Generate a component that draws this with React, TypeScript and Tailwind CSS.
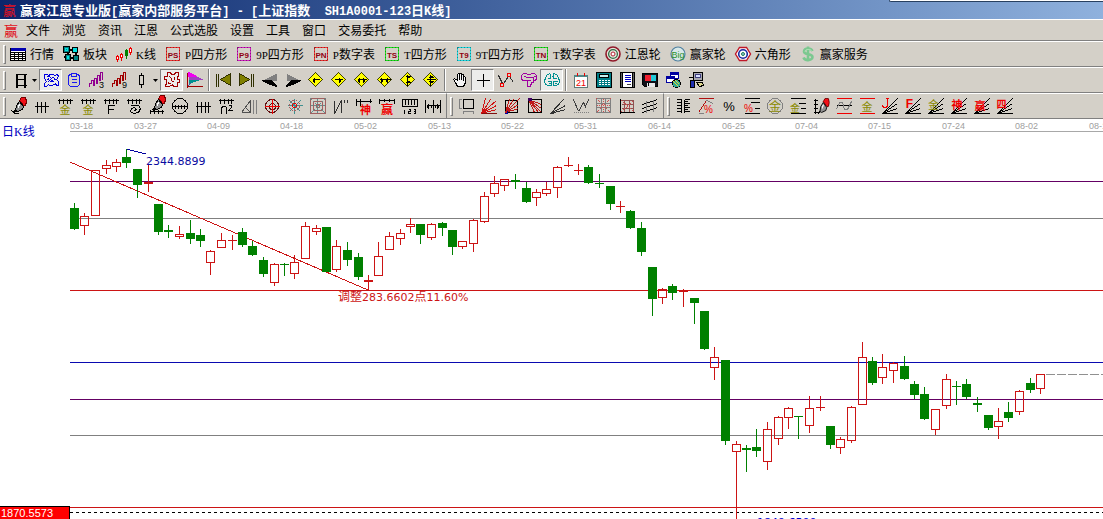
import React from "react";

const INK = "#000";
const RED = "#f00000";
const OLIVE = "#8a8a00";
const GRAY = "#808080";

/* ---------- text ---------- */

interface MixedTextProps {
  text: string;
  latin: string;
}

// Latin runs use their own face and size next to the CJK glyphs.
const MixedText: React.FC<MixedTextProps> = ({ text, latin }) => (
  <>
    {text.split(/([\x20-\x7e]+)/).map((part, index) =>
      index % 2 === 1 ? (
        <span key={index} className={latin}>
          {part}
        </span>
      ) : (
        part
      )
    )}
  </>
);

/* ---------- icon parts ---------- */

interface GlyphProps {
  children: React.ReactNode;
  smooth?: boolean;
}

const Glyph: React.FC<GlyphProps> = ({ children, smooth = false }) => (
  <svg
    className="block h-4 w-4 shrink-0 overflow-visible"
    viewBox="-0.5 -0.5 16 16"
    fill="none"
    stroke={INK}
    shapeRendering={smooth ? "auto" : "crispEdges"}
    aria-hidden="true"
  >
    {children}
  </svg>
);

interface CharProps {
  x: number;
  y: number;
  size?: number;
  color?: string;
  bold?: boolean;
  children: string;
}

const Char: React.FC<CharProps> = ({
  x,
  y,
  size = 10,
  color = RED,
  bold = false,
  children,
}) => (
  <text
    x={x}
    y={y}
    fontSize={size}
    fill={color}
    stroke="none"
    textAnchor="middle"
    fontWeight={bold ? 700 : 400}
    fontFamily='"Liberation Sans", "Noto Sans CJK SC", sans-serif'
  >
    {children}
  </text>
);

const Comb = () => <path d="M0 2h15M2 0v5M6 0v5M10 0v5M13 0v5" />;

const Brush = () => (
  <g>
    <path d="M8 2l2-3 4 0 1 4-1 4-2 0z" fill="#f01018" stroke="#700" />
    <path d="M8 3l4 5-1 3-5 2-2-1 1-5z" fill="#909090" stroke={INK} />
    <path d="M7 6v3M8 5v2" stroke="#fff" />
    <path d="M4 12l-2 2" stroke={INK} strokeWidth="2" />
  </g>
);

const Fan = () => <path d="M0 15L15 0M0 15L15 5M0 15L15 10M0 15h15" />;

interface SquareProps {
  label: string;
  color: string;
}

const SquareIcon: React.FC<SquareProps> = ({ label, color }) => (
  <Glyph>
    <rect x="1" y="1" width="13" height="13" stroke={color} strokeWidth="1" />
    <rect
      x="1"
      y="1"
      width="13"
      height="13"
      stroke={INK}
      strokeOpacity="0.35"
      strokeDasharray="1 2"
    />
    <Char x={7.5} y={11} size={8} color="#900010" bold>
      {label}
    </Char>
  </Glyph>
);

interface DiamondProps {
  d: string;
}

const DiamondIcon: React.FC<DiamondProps> = ({ d }) => (
  <Glyph>
    <path d="M7 0l7 7-7 7-7-7z" fill="#ffff00" stroke="#404000" />
    <path d={d} stroke={INK} />
  </Glyph>
);

/* ---------- first toolbar ---------- */

interface Tool {
  label: string;
  icon: React.ReactNode;
  pressed?: boolean;
  menu?: boolean;
}

const pageTools: Tool[] = [
  {
    label: "行情",
    icon: (
      <Glyph>
        <path d="M0 2h15v12H0z" fill="#fff" />
        <path d="M0 2h15M0 3h15" stroke="#0000b0" strokeWidth="2" />
        <path d="M0 6h15M0 8h15M0 10h15M0 12h15M0 14h15M4 5v9M8 5v9M12 5v9" />
      </Glyph>
    ),
  },
  {
    label: "板块",
    icon: (
      <Glyph>
        <path d="M0 0h6v6H0zM2 8h5v6H2zM10 9h5v5h-5z" fill="#008080" />
        <path d="M9 1h5v5H9z" fill="#00e0e0" />
        <path d="M6 3h3M12 6v3M7 11h3M4 6v2M0 10h2" strokeWidth="2" />
        <path d="M2 2h2v2H2zM4 10h1v2H4z" stroke="#00e0e0" />
      </Glyph>
    ),
  },
  {
    label: "K线",
    icon: (
      <Glyph>
        <path d="M1 8v7M5 6v8M14 0v8" stroke={RED} />
        <path d="M0 10h2v3H0zM4 8h2v3H4zM13 2h2v4h-2z" fill="#fff" stroke={RED} />
        <path d="M10 2v10" stroke="#008000" />
        <path d="M9 4h2v5H9z" fill="#008000" stroke="#008000" />
      </Glyph>
    ),
  },
  { label: "P四方形", icon: <SquareIcon label="PS" color="#f03030" /> },
  { label: "9P四方形", icon: <SquareIcon label="P9" color="#d020c0" /> },
  { label: "P数字表", icon: <SquareIcon label="PN" color="#f03030" /> },
  { label: "T四方形", icon: <SquareIcon label="TS" color="#20e020" /> },
  { label: "9T四方形", icon: <SquareIcon label="T9" color="#20d8e0" /> },
  { label: "T数字表", icon: <SquareIcon label="TN" color="#20e020" /> },
  {
    label: "江恩轮",
    icon: (
      <Glyph smooth>
        <circle cx="7.5" cy="7.5" r="7" fill="#e8e4dc" stroke="#901828" strokeWidth="1.6" />
        <circle cx="7.5" cy="7.5" r="4.4" stroke="#307048" strokeWidth="1.3" />
        <circle cx="7.5" cy="7.5" r="2" fill="#fff" stroke="#b02030" />
      </Glyph>
    ),
  },
  {
    label: "赢家轮",
    icon: (
      <Glyph smooth>
        <circle cx="7.5" cy="7.5" r="7" fill="#d8e8e8" stroke="#5080a0" strokeWidth="1.2" />
        <Char x={7.5} y={11} size={9} color="#289028">
          Big
        </Char>
      </Glyph>
    ),
  },
  {
    label: "六角形",
    icon: (
      <Glyph smooth>
        <path d="M4 1h7l4 6.5-4 6.5H4L0 7.5z" fill="#fff" stroke="#c01828" strokeWidth="1.4" />
        <circle cx="7.5" cy="7.5" r="4.3" stroke="#1828a0" strokeWidth="1.6" />
        <circle cx="7.5" cy="7.5" r="1.5" fill="#90c0e0" stroke="#208050" />
      </Glyph>
    ),
  },
  {
    label: "赢家服务",
    icon: (
      <Glyph smooth>
        <path
          d="M12 4.5C11 2.500 9 2 7.500 2 5 2 3.500 3.300 3.500 5c0 4 8.500 1.500 8.500 5.500C12 12.500 10 13.500 7.500 13.500 5 13.500 3.500 12.500 3 11M7.500 0v15"
          stroke="#7cc890"
          strokeWidth="2.600"
        />
        <path d="M11 4C9 2.500 5 2.500 4.500 5" stroke="#b4e8bc" />
      </Glyph>
    ),
  },
];

/* ---------- second toolbar ---------- */

const viewTools: Tool[][] = [
  [
    {
      label: "日线周期",
      menu: true,
      icon: (
        <Glyph>
          <path d="M3 2h11M4 7h9M3 13h11M4 2v13M5 2v13M12 2v13M13 2v13" />
        </Glyph>
      ),
    },
    {
      label: "叠加",
      pressed: true,
      icon: (
        <Glyph>
          <path
            d="M1 2h3l1 1 2-1h3l1 1 3-1 1 2-2 3 2 2v4h-2l-1-2-3 2H6l-1-1-2 2H1v-3l2-2-2-3zM3 4h3l2 2 3-2M4 10l3-3 4 3M6 9h3M5 6l-1 2M11 6l1 2"
            stroke="#0000e0"
          />
        </Glyph>
      ),
    },
    {
      label: "信息",
      icon: (
        <Glyph>
          <path d="M3 2h2V1h5v1h2l1 2v8l-2 2H4l-2-2V4zM5 2v2h5V2M5 7h5M5 10h5" stroke="#1818f0" />
        </Glyph>
      ),
    },
    {
      label: "三段线",
      icon: (
        <Glyph>
          <path d="M0 14v-3h2V8h2v5h1V6h2v5h1V3h2v5h1V0h2v7" stroke="#900090" />
          <Char x={12} y={15} size={9} color={INK}>
            3
          </Char>
        </Glyph>
      ),
    },
    {
      label: "九段线",
      icon: (
        <Glyph>
          <path d="M0 14v-3h2V8h2v5h1V6h2v5h1V3h2v5h1V0h2v7" stroke="#a00000" />
          <Char x={12} y={15} size={9} color={INK}>
            9
          </Char>
        </Glyph>
      ),
    },
    {
      label: "K线样式",
      menu: true,
      icon: (
        <Glyph>
          <path d="M6 3h4v9H6zM8 0v3M8 12v3" />
        </Glyph>
      ),
    },
    {
      label: "缺口",
      pressed: true,
      icon: (
        <Glyph>
          <path
            d="M3 0h3l1 2h3l1-2h3v4h-1v3h2v3h-2v4h-4l-1-2-3 2H1l1-4V7H0V4h3zM5 4l2 2v2l3 2M10 4v3M4 9v2h2M9 5h1"
            stroke="#a00000"
          />
        </Glyph>
      ),
    },
    {
      label: "筹码分布",
      icon: (
        <Glyph>
          <path d="M1 0l8 4H1z" fill="#f000f0" stroke="#f000f0" />
          <path d="M1 4h8l6 3H1z" fill="#a040c0" stroke="none" />
          <path d="M1 7h13l-9 3H1z" fill="#009090" stroke="none" />
          <path d="M1 10h4l-4 3z" fill="#4060a0" stroke="none" />
          <path d="M0 0v15M0 14h15" stroke="#a00000" />
        </Glyph>
      ),
    },
  ],
  [
    {
      label: "最前",
      icon: (
        <Glyph>
          <path d="M0 1v13M2 1v13" stroke="#303000" />
          <path d="M14 1v12L4 7z" fill="#808000" stroke="#303000" />
        </Glyph>
      ),
    },
    {
      label: "最后",
      icon: (
        <Glyph>
          <path d="M14 1v13M12 1v13" stroke="#303000" />
          <path d="M0 1v12l10-6z" fill="#808000" stroke="#303000" />
        </Glyph>
      ),
    },
    {
      label: "向前",
      icon: (
        <Glyph>
          <path d="M14 1v7H1z" fill="#808080" stroke="none" />
          <path d="M0 8h9l5 5v1l-6-2z" fill={INK} stroke={INK} />
        </Glyph>
      ),
    },
    {
      label: "向后",
      icon: (
        <Glyph>
          <path d="M1 1v7h13z" fill="#808080" stroke="none" />
          <path d="M15 8H6l-5 5v1l6-2z" fill={INK} stroke={INK} />
        </Glyph>
      ),
    },
    { label: "左移", icon: <DiamondIcon d="M4 7h7M5 6v3M6 5v5" /> },
    { label: "右移", icon: <DiamondIcon d="M3 7h8M9 6v3M8 5v5" /> },
    { label: "横向放大", icon: <DiamondIcon d="M3 7h9M4 6v3M5 5v5M10 6v3M9 5v5" /> },
    { label: "横向缩小", icon: <DiamondIcon d="M2 7h11M5 6v3M4 5v5M9 6v3M10 5v5" /> },
    { label: "纵向缩小", icon: <DiamondIcon d="M7 2v11M6 5h3M5 4h5M6 9h3M5 10h5" /> },
    { label: "纵向放大", icon: <DiamondIcon d="M7 2v11M6 4h3M5 5h5M6 10h3M5 9h5M3 7h9" /> },
  ],
  [
    {
      label: "拖动",
      icon: (
        <Glyph>
          <path d="M5 14l-2-4-2-3 1-1 3 2V2l1-1 1 1v5V1h2v6V2h2v6V4h1l1 1v5l-2 4z" fill="#f4f4f4" />
        </Glyph>
      ),
    },
    {
      label: "十字光标",
      pressed: true,
      icon: (
        <Glyph>
          <path d="M1 8h13M8 1v13" />
        </Glyph>
      ),
    },
    {
      label: "转折点",
      icon: (
        <Glyph>
          <path d="M0 3l4 8M5 11l5-7M11 4l4 6" stroke="#303030" />
          <path d="M2 11h3v3H2zM9 1h3v3H9z" stroke={RED} />
        </Glyph>
      ),
    },
    {
      label: "头肩",
      icon: (
        <Glyph>
          <path
            d="M2 1h3l1 1h3l1-1h3l2 2v4l-2 1h-2M2 1L0 3v4l2 1h3M4 5h8v5h-2v2H9v2H6V8h3M2 4h2M12 4h2"
            stroke="#a000a0"
          />
        </Glyph>
      ),
    },
    {
      label: "脑图",
      pressed: true,
      icon: (
        <Glyph>
          <path
            d="M6 1L3 2 1 5l-1 4 1 3 3 1h3V9H3M9 1l3 1 2 3 1 4-1 3-3 1H9V9h4M6 1v5H3M9 1v5h3M4 11h2M10 11h2M7 4h2"
            stroke="#009090"
          />
        </Glyph>
      ),
    },
  ],
  [
    {
      label: "日历",
      icon: (
        <Glyph>
          <path d="M1 3h13v12H1z" fill="#fff" stroke="#607878" />
          <path d="M1 3h13v1H1z" fill="#00b0b0" stroke="#508888" />
          <path d="M4 0v3M11 0v3" stroke={RED} />
          <Char x={7.5} y={13} size={9}>
            21
          </Char>
        </Glyph>
      ),
    },
    {
      label: "计算器",
      icon: (
        <Glyph>
          <path d="M0 0h15v15H0z" fill="#007c84" />
          <path d="M3 2h9v3H3z" fill="#c8f0f0" />
          <path d="M2 8h12M2 10h12M2 12h12" stroke="#fff" strokeDasharray="2 1" />
        </Glyph>
      ),
    },
    {
      label: "笔记",
      icon: (
        <Glyph>
          <path d="M1 0h13v15H1z" fill="#fff" />
          <path d="M1 0h2v15H1zM13 0h2v15h-2z" fill="#606060" />
          <path d="M5 3h6M5 5h6M5 7h6M5 9h6" stroke="#0000c0" />
          <path d="M7 12h4" stroke="#404040" />
        </Glyph>
      ),
    },
    {
      label: "保存",
      icon: (
        <Glyph>
          <path d="M0 1h15v13H2l-2-2z" fill="#101018" />
          <path d="M2 2h6v6H2z" fill="#f02030" stroke="none" />
          <path d="M8 2h5v6H8z" fill="#20c8d8" stroke="none" />
          <path d="M4 10h8v4H4z" fill="#e8e8e8" stroke="none" />
          <path d="M6 10v3" />
        </Glyph>
      ),
    },
    {
      label: "窗口布局",
      icon: (
        <Glyph>
          <path d="M5 0h8v6H5zM1 4h8v6H1z" fill="#fff" stroke="#0000a0" />
          <path d="M5 1h8M1 5h8" stroke="#0000a0" strokeWidth="2" />
          <circle cx="11" cy="11" r="4" fill="#30a890" />
          <path d="M8 9l5 5M10 8l4 4" stroke="#e8d830" />
        </Glyph>
      ),
    },
    {
      label: "联网",
      icon: (
        <Glyph>
          <path d="M5 0h9v8H5z" fill="#a8a8b0" />
          <path d="M7 2h5v3H7z" fill="#d8e0ff" stroke="#404080" />
          <path d="M2 8h4v7H2z" fill="#2030b0" />
          <path d="M8 10h6l1 3-4 1z" fill="#e0d890" />
          <path d="M0 5h4M9 8h5" />
        </Glyph>
      ),
    },
  ],
];

/* ---------- drawing toolbar ---------- */

const drawTools: Tool[][] = [
  [
    {
      label: "画笔",
      icon: (
        <Glyph>
          <Brush />
          <path d="M0 12l3 3h4" stroke={INK} />
        </Glyph>
      ),
    },
    {
      label: "等分线",
      icon: (
        <Glyph>
          <path d="M0 8h14M3 3v11M7 3v11M11 3v11" />
        </Glyph>
      ),
    },
    {
      label: "黄金分割时间",
      icon: (
        <Glyph>
          <Comb />
          <Char x={7.5} y={15} size={11} color={OLIVE}>
            金
          </Char>
        </Glyph>
      ),
    },
    {
      label: "黄金周期",
      icon: (
        <Glyph>
          <Comb />
          <Char x={7.5} y={15} size={11} color={OLIVE}>
            金
          </Char>
        </Glyph>
      ),
    },
    {
      label: "斐波那契周期",
      icon: (
        <Glyph>
          <Comb />
          <path d="M5 15V7h6M5 11h5" />
        </Glyph>
      ),
    },
    {
      label: "螺旋周期",
      icon: (
        <Glyph>
          <Comb />
          <path d="M4 7h8l2 3-2 4-5 1-3-2 1-3 3-1 2 2-2 1" />
        </Glyph>
      ),
    },
    {
      label: "画笔标尺",
      icon: (
        <Glyph>
          <g transform="translate(1 -2)">
            <Brush />
          </g>
          <path d="M0 13h14M1 11v4M5 11v4M9 11v4M13 11v4" />
        </Glyph>
      ),
    },
    {
      label: "圆形周期",
      icon: (
        <Glyph>
          <circle cx="7.5" cy="7.5" r="7.500" />
          <path d="M0 8h15M3 6v4M6 6v4M9 6v4M12 6v4" />
        </Glyph>
      ),
    },
    {
      label: "周期线",
      icon: (
        <Glyph>
          <path d="M0 8h15M2 3v11M6 3v11M10 3v11M13 3v11" />
        </Glyph>
      ),
    },
    {
      label: "平方周期",
      icon: (
        <Glyph>
          <Comb />
          <path d="M3 15V8M3 9l2-1h2l1 1v6M10 7h3v2l-3 3h4" />
        </Glyph>
      ),
    },
    {
      label: "三角时间",
      icon: (
        <Glyph>
          <path d="M0 14L9 2v12L0 14M4 9l5 5" stroke="#505050" />
          <path d="M12 1v14M15 1v14" stroke={GRAY} />
        </Glyph>
      ),
    },
    {
      label: "圆弧",
      icon: (
        <Glyph>
          <circle cx="7.500" cy="7.500" r="6.500" stroke="#601010" />
          <circle cx="8" cy="8" r="3" stroke="#601010" />
          <path d="M0 8h15M8 0v15" stroke={RED} />
        </Glyph>
      ),
    },
    {
      label: "极坐标",
      icon: (
        <Glyph>
          <path d="M7 0v15M0 7h15M2 2l11 11M13 2L2 13" stroke="#409090" />
          <circle cx="7" cy="7" r="5" stroke="#a06060" strokeDasharray="2 1" />
          <circle cx="7" cy="7" r="2" stroke={RED} />
        </Glyph>
      ),
    },
    {
      label: "江恩方阵",
      icon: (
        <Glyph>
          <path d="M0 0h15v15H0zM3 3h9v9H3zM6 6h3v3H6z" stroke="#a06060" />
          <path d="M0 0l15 15M15 0L0 15M7 0v15M0 7h15" stroke="#609090" strokeDasharray="2 1" />
        </Glyph>
      ),
    },
    {
      label: "波浪",
      icon: (
        <Glyph>
          <path d="M1 2v13M1 15L8 2M8 2v12M11 1v3M14 1v3" stroke="#303030" />
        </Glyph>
      ),
    },
    {
      label: "神奇周期",
      icon: (
        <Glyph>
          <path d="M0 3h15M0 0v7M4 0v7M14 0v4" />
          <Char x={9} y={15} size={11} bold>
            神
          </Char>
        </Glyph>
      ),
    },
    {
      label: "赢家周期",
      icon: (
        <Glyph>
          <path d="M0 2h15M0 0v5M5 0v3M10 0v3M15 0v5" />
          <Char x={7.5} y={15} size={12} bold>
            赢
          </Char>
        </Glyph>
      ),
    },
    {
      label: "刻度尺",
      icon: (
        <Glyph>
          <path d="M0 8V1h15v7M3 1v5M6 1v5M9 1v5M12 1v5M0 8h15" />
          <path d="M2 11v4M6 11h2v2H6v2h2M11 11h2v4h-2M11 13h2" />
        </Glyph>
      ),
    },
    {
      label: "区间",
      icon: (
        <Glyph>
          <path d="M0 1v13M15 1v13M8 1v13M1 7h14M2 6v3M3 5v5M13 6v3M12 5v5M6 6v3M10 6v3" />
        </Glyph>
      ),
    },
  ],
  [
    {
      label: "矩形量度",
      icon: (
        <Glyph>
          <path d="M5 1h10v9H5z" />
          <path d="M1 1v9M0 1h3M0 10h3M5 13h10M5 12v3M15 12v3" stroke={GRAY} />
        </Glyph>
      ),
    },
    {
      label: "江恩扇形",
      icon: (
        <Glyph>
          <path d="M0 15L4 0M0 15L9 1M0 15L15 2M0 15l15-8M0 15l15-4" stroke="#d01010" />
          <path d="M0 15h15" stroke="#801010" />
        </Glyph>
      ),
    },
    {
      label: "上升扇形箱",
      icon: (
        <Glyph>
          <path d="M1 2h12v12H1z" />
          <path d="M1 14L5 1M1 14L15 0M1 14l13-8M1 14l13-4M1 14L9 1" stroke="#c01818" />
          <path d="M0 15h3v-3" stroke="#0000a0" />
        </Glyph>
      ),
    },
    {
      label: "下降扇形箱",
      icon: (
        <Glyph>
          <path d="M1 1h13v13H1z" />
          <path d="M1 1l13 13M1 1l6 13M1 1l10 13M1 1l13 9M1 1l13 5" stroke="#c01818" />
          <path d="M0 0h4M0 1h4M0 2h4" stroke="#400060" />
        </Glyph>
      ),
    },
    {
      label: "速度线",
      icon: (
        <Glyph>
          <path d="M0 15L13 1M0 15l15-8M0 15l15-4M0 15h3" stroke="#303030" />
        </Glyph>
      ),
    },
    {
      label: "折线",
      icon: (
        <Glyph>
          <path d="M0 1l5 12M5 13l5-9M10 4l2 4 3-7" stroke="#404040" />
          <path d="M0 14h15" stroke={GRAY} strokeDasharray="1 1" />
        </Glyph>
      ),
    },
    {
      label: "网格",
      icon: (
        <Glyph>
          <path d="M0 0h14v14H0zM0 5h14M0 9h14M5 0v14M9 0v14" stroke={GRAY} />
          <path d="M0 0l14 14M14 0L0 14M7 0v14M0 7h14" stroke="#d05050" strokeDasharray="1 1" />
        </Glyph>
      ),
    },
    {
      label: "坐标网格",
      icon: (
        <Glyph>
          <path d="M2 2h12v11M5 2v11M10 2v11M2 6h12M2 10h12" stroke="#905050" />
          <path d="M2 13L14 2M2 2l12 11" stroke="#d05050" strokeDasharray="1 1" />
          <path d="M1 0v15M0 14h15" />
        </Glyph>
      ),
    },
    {
      label: "平行线",
      icon: (
        <Glyph>
          <path d="M0 6l15-5M0 10l15-5M0 14l15-5" />
          <path d="M4 2v12M11 1v12" stroke={GRAY} />
        </Glyph>
      ),
    },
  ],
  [
    {
      label: "价格刻度",
      icon: (
        <Glyph>
          <path d="M1 1h5M1 4h5M1 7h5M1 10h5M1 13h5M6 1v13M9 1h5M9 3h3M9 5h5M9 7h3M9 9h5M9 11h3M9 13h5M9 1v13" />
        </Glyph>
      ),
    },
    {
      label: "百分比线",
      icon: (
        <Glyph>
          <path d="M0 0h15M0 14l8-12" stroke="#b01010" />
          <path d="M0 15h5M8 2l7 3" stroke={GRAY} />
          <Char x={10} y={14} size={10}>
            %
          </Char>
        </Glyph>
      ),
    },
    {
      label: "百分比",
      icon: (
        <Glyph>
          <Char x={7.5} y={12} size={13} color={INK}>
            %
          </Char>
        </Glyph>
      ),
    },
    {
      label: "百分比回调",
      icon: (
        <Glyph>
          <path d="M0 0h15M6 4h9M10 10h5M0 15h15" />
          <Char x={4} y={13} size={10}>
            %
          </Char>
        </Glyph>
      ),
    },
    {
      label: "黄金圆",
      icon: (
        <Glyph>
          <circle cx="7.500" cy="7.500" r="7.500" stroke={GRAY} />
          <Char x={7.5} y={12} size={12} color={OLIVE}>
            金
          </Char>
        </Glyph>
      ),
    },
    {
      label: "黄金分割",
      icon: (
        <Glyph>
          <path d="M0 0h15M8 5h7M10 10h5M0 15h15" />
          <Char x={4.5} y={13} size={10} color={OLIVE}>
            金
          </Char>
        </Glyph>
      ),
    },
    {
      label: "画笔刻度",
      icon: (
        <Glyph>
          <path d="M2 0v15M0 2h4M0 6h4M0 10h4M0 14h4" />
          <g transform="translate(3 1) scale(0.85 1)">
            <Brush />
          </g>
        </Glyph>
      ),
    },
    {
      label: "波动通道",
      icon: (
        <Glyph>
          <path d="M0 0h15M0 15h15" stroke={RED} />
          <path d="M0 7h15" />
          <path d="M0 11l3-7h3l2 7h3l4-8" stroke={GRAY} />
        </Glyph>
      ),
    },
    {
      label: "黄金通道",
      icon: (
        <Glyph>
          <path d="M0 0h15M0 15h15" stroke={RED} />
          <Char x={7.5} y={12} size={11} color={OLIVE}>
            金
          </Char>
        </Glyph>
      ),
    },
    {
      label: "J角度线",
      icon: (
        <Glyph>
          <Fan />
          <path d="M5 0v7l-1 2H1L0 7M3 0h3" stroke={RED} />
        </Glyph>
      ),
    },
    {
      label: "F角度线",
      icon: (
        <Glyph>
          <Fan />
          <Char x={4} y={9} size={12} bold>
            F
          </Char>
        </Glyph>
      ),
    },
    {
      label: "黄金角度线",
      icon: (
        <Glyph>
          <Fan />
          <Char x={5} y={10} size={11} color={OLIVE}>
            金
          </Char>
        </Glyph>
      ),
    },
    {
      label: "神奇角度线",
      icon: (
        <Glyph>
          <Fan />
          <Char x={5.5} y={10} size={11} bold>
            神
          </Char>
        </Glyph>
      ),
    },
    {
      label: "赢家角度线",
      icon: (
        <Glyph>
          <Fan />
          <Char x={5.5} y={11} size={11} bold>
            赢
          </Char>
        </Glyph>
      ),
    },
    {
      label: "四方角度线",
      icon: (
        <Glyph>
          <Fan />
          <Char x={4} y={9} size={10} bold>
            四
          </Char>
        </Glyph>
      ),
    },
  ],
];

/* ---------- toolbar pieces ---------- */

const Gripper = () => (
  <span className="h-[19px] w-[3px] shrink-0 border border-t-white border-r-[#808080] border-b-[#808080] border-l-white" />
);

const Separator = () => (
  <span className="mx-0.5 h-[22px] w-0.5 shrink-0 border-l border-[#808080] bg-white" />
);

const ToolButton: React.FC<{ tool: Tool }> = ({ tool }) => {
  const face = tool.pressed
    ? "border-t-[#808080] border-l-[#808080] border-r-white border-b-white bg-[#ececea]"
    : "border-transparent";

  return (
    <button
      type="button"
      aria-label={tool.label}
      aria-pressed={tool.pressed}
      className={`flex h-[22px] shrink-0 items-center justify-center border ${face} ${
        tool.menu ? "w-[29px] gap-1" : "w-[23px]"
      }`}
    >
      {tool.icon}
      {tool.menu && (
        <svg className="block h-[3px] w-[5px] shrink-0" viewBox="0 0 5 3" aria-hidden="true">
          <path d="M0 0h5L2.500 3z" />
        </svg>
      )}
    </button>
  );
};

const rowClass =
  "flex h-[26px] shrink-0 items-center border-t border-b border-t-white border-b-[#808080]";

/* ---------- chart ---------- */

const ORIGIN_X = 70;
const ORIGIN_Y = 119;
const UP = "#cc1414";
const DOWN = "#008000";

const dates: [number, string][] = [
  [70, "03-18"],
  [134, "03-27"],
  [207, "04-09"],
  [280, "04-18"],
  [354, "05-02"],
  [428, "05-13"],
  [501, "05-22"],
  [574, "05-31"],
  [648, "06-14"],
  [722, "06-25"],
  [795, "07-04"],
  [868, "07-15"],
  [942, "07-24"],
  [1015, "08-02"],
  [1089, "08-13"],
];

const levels: [number, string][] = [
  [181, "#640064"],
  [218, "#808080"],
  [290, "#cc1414"],
  [362, "#0a0ab0"],
  [399, "#640064"],
  [435, "#808080"],
  [507, "#cc1414"],
];

// x, high, body top, body bottom, low, 1 = rising
const candles: number[][] = [
  [74, 203, 208, 229, 230, 0],
  [84, 213, 216, 226, 235, 1],
  [95, 170, 170, 216, 216, 1],
  [106, 160, 165, 169, 174, 1],
  [116, 159, 162, 167, 172, 1],
  [126, 149, 157, 163, 168, 0],
  [137, 169, 169, 185, 198, 0],
  [148, 164, 182, 184, 192, 1],
  [158, 204, 204, 232, 235, 0],
  [168, 225, 230, 232, 238, 0],
  [179, 226, 234, 237, 239, 1],
  [190, 220, 233, 239, 244, 0],
  [200, 229, 235, 241, 247, 0],
  [210, 250, 251, 263, 275, 1],
  [221, 233, 240, 248, 248, 1],
  [232, 235, 240, 241, 250, 1],
  [242, 228, 232, 245, 247, 0],
  [252, 241, 246, 255, 256, 0],
  [263, 257, 260, 274, 277, 0],
  [274, 263, 264, 283, 286, 1],
  [284, 263, 264, 265, 276, 0],
  [294, 255, 262, 274, 279, 1],
  [305, 222, 226, 259, 259, 1],
  [316, 225, 228, 232, 235, 1],
  [326, 227, 227, 272, 272, 0],
  [336, 240, 246, 270, 272, 1],
  [347, 242, 250, 260, 266, 0],
  [358, 253, 257, 277, 280, 0],
  [368, 275, 280, 282, 290, 1],
  [378, 242, 256, 276, 276, 1],
  [389, 232, 236, 250, 250, 1],
  [400, 229, 233, 239, 245, 1],
  [410, 218, 224, 227, 233, 1],
  [420, 224, 224, 235, 244, 0],
  [431, 223, 224, 238, 240, 1],
  [442, 222, 223, 228, 236, 0],
  [452, 230, 230, 247, 255, 0],
  [462, 241, 241, 247, 249, 1],
  [473, 219, 220, 244, 252, 1],
  [484, 192, 196, 222, 223, 1],
  [494, 176, 183, 194, 197, 1],
  [504, 179, 179, 186, 191, 1],
  [515, 174, 180, 182, 189, 0],
  [526, 182, 188, 202, 203, 0],
  [536, 189, 192, 198, 206, 1],
  [546, 182, 189, 194, 196, 1],
  [557, 166, 167, 188, 198, 1],
  [568, 157, 165, 166, 167, 1],
  [578, 164, 170, 171, 175, 1],
  [588, 165, 167, 183, 184, 0],
  [599, 174, 183, 184, 188, 0],
  [610, 186, 186, 204, 210, 0],
  [620, 201, 206, 207, 213, 1],
  [630, 210, 211, 228, 229, 0],
  [641, 222, 228, 252, 256, 0],
  [652, 267, 267, 299, 316, 0],
  [662, 288, 289, 298, 304, 1],
  [672, 284, 286, 293, 300, 0],
  [683, 289, 290, 292, 307, 1],
  [694, 298, 298, 303, 324, 0],
  [704, 311, 311, 349, 350, 0],
  [714, 347, 357, 368, 380, 1],
  [725, 360, 360, 441, 445, 0],
  [736, 441, 444, 452, 519, 1],
  [746, 445, 448, 450, 472, 0],
  [756, 429, 447, 451, 457, 0],
  [767, 422, 429, 462, 470, 1],
  [778, 416, 417, 439, 445, 1],
  [788, 407, 408, 418, 429, 1],
  [798, 416, 416, 417, 439, 0],
  [809, 396, 408, 426, 433, 1],
  [820, 396, 407, 408, 411, 1],
  [830, 426, 426, 445, 449, 0],
  [840, 437, 439, 448, 454, 1],
  [851, 406, 407, 441, 443, 1],
  [862, 342, 357, 405, 405, 1],
  [872, 357, 361, 383, 385, 0],
  [882, 354, 367, 378, 384, 1],
  [893, 362, 363, 371, 383, 1],
  [904, 356, 366, 379, 380, 0],
  [914, 381, 384, 395, 399, 0],
  [924, 387, 394, 419, 420, 0],
  [935, 409, 409, 430, 435, 1],
  [946, 374, 379, 406, 409, 1],
  [956, 381, 386, 387, 405, 0],
  [966, 379, 384, 397, 399, 0],
  [977, 397, 403, 405, 412, 0],
  [988, 415, 415, 428, 430, 0],
  [998, 408, 421, 427, 439, 1],
  [1008, 402, 412, 418, 422, 0],
  [1019, 390, 391, 412, 415, 1],
  [1030, 378, 383, 390, 393, 0],
  [1040, 374, 374, 389, 394, 1],
];

const Candle: React.FC<{ data: number[] }> = ({ data }) => {
  const [x, high, top, bottom, low, rising] = data;
  const color = rising ? UP : DOWN;
  const hollow = rising === 1 && bottom - top > 2;

  return (
    <g fill={color}>
      {high < top && <rect x={x} y={high} width={1} height={top - high} />}
      {low > bottom && <rect x={x} y={bottom} width={1} height={low - bottom} />}
      {hollow ? (
        <path
          fillRule="evenodd"
          d={`M${x - 4} ${top}h9v${bottom - top}h-9zM${x - 3} ${top + 1}v${
            bottom - top - 2
          }h7v-${bottom - top - 2}z`}
        />
      ) : (
        <rect x={x - 4} y={top} width={9} height={bottom - top} />
      )}
    </g>
  );
};

const numberFont = '"DejaVu Sans", "Noto Sans CJK SC", sans-serif';

const Chart = () => (
  <svg
    className="block h-full min-w-0 flex-1"
    role="img"
    aria-label="上证指数日K线"
    shapeRendering="crispEdges"
  >
    <rect x={0} y={12} width="100%" height={1} fill="#a8a8a8" />
    {levels.map(([y, color]) => (
      <rect key={y} x={0} y={y - ORIGIN_Y} width="100%" height={1} fill={color} />
    ))}
    <line x1={0} x2="100%" y1={393.5} y2={393.5} stroke="#000" strokeDasharray="3 3" />
    <line x1={976} x2="100%" y1={255.5} y2={255.5} stroke="#909090" strokeDasharray="9 2" />
    <g transform={`translate(${-ORIGIN_X} ${-ORIGIN_Y})`}>
      <g fill="#a0a0a0" fontSize={9} fontFamily='"Liberation Sans", sans-serif'>
        {dates.map(([x, label]) => (
          <text key={label} x={x} y={129}>
            {label}
          </text>
        ))}
      </g>
      <path d="M70 162L368 290" stroke={UP} fill="none" />
      <path d="M126 149l20 5" stroke="#0000a0" fill="none" />
      {candles.map((data) => (
        <Candle key={data[0]} data={data} />
      ))}
      <g fontFamily={numberFont} fontSize={11}>
        <text x={146} y={165} fill="#0a0aa0">
          2344.8899
        </text>
        <text x={757} y={526} fill="#0000d0">
          1849.6500
        </text>
        <text x={338} y={301} fill={UP}>
          <tspan fontSize={12}>调整</tspan>283.6602<tspan fontSize={12}>点</tspan>11.60%
        </text>
      </g>
    </g>
  </svg>
);

/* ---------- window ---------- */

const menus = [
  "文件",
  "浏览",
  "资讯",
  "江恩",
  "公式选股",
  "设置",
  "工具",
  "窗口",
  "交易委托",
  "帮助",
];

const serifLatin = "font-['Liberation_Serif'] text-[11px]";

const App = () => (
  <div className="flex h-screen flex-col overflow-hidden bg-white font-['Noto_Sans_CJK_SC',sans-serif] text-xs leading-4 text-black">
    <header className="relative flex h-[19px] shrink-0 items-center gap-1 bg-linear-to-r from-[#0c266c] to-[#8fb1dd] pl-[3px] text-[13px] leading-[19px] font-bold whitespace-pre text-white">
      <span className="w-[13px] text-center font-normal text-[#e01020]">赢</span>
      <h1>
        <MixedText
          text="赢家江恩专业版[赢家内部服务平台] - [上证指数  SH1A0001-123日K线]"
          latin="font-['Liberation_Mono'] text-xs"
        />
      </h1>
      <span className="absolute top-0 right-0 h-0.5 w-[214px] rounded-bl border-b border-l border-[#284060] bg-white" />
    </header>

    <nav className="flex h-[22px] shrink-0 items-center gap-3 border-t border-b border-t-white border-b-[#808080] bg-[#d4d0c8] pl-1">
      <span className="-mr-1 w-[14px] text-center text-sm text-[#e01020]">赢</span>
      {menus.map((menu) => (
        <button key={menu} type="button">
          {menu}
        </button>
      ))}
    </nav>

    <div className="shrink-0 bg-[#d4d0c8]">
      <div className={`${rowClass} gap-1 pl-[3px]`} role="toolbar" aria-label="页面">
        <Gripper />
        <div className="flex items-center gap-[9px]">
          {pageTools.map((tool) => (
            <button
              key={tool.label}
              type="button"
              className="flex items-center gap-1 whitespace-nowrap"
            >
              {tool.icon}
              <span>
                <MixedText text={tool.label} latin={serifLatin} />
              </span>
            </button>
          ))}
        </div>
      </div>

      <div className={`${rowClass} gap-1 pl-[3px]`} role="toolbar" aria-label="视图">
        <Gripper />
        <div className="flex items-center">
          {viewTools.map((group, index) => (
            <React.Fragment key={index}>
              {index > 0 && <Separator />}
              {group.map((tool) => (
                <ToolButton key={tool.label} tool={tool} />
              ))}
            </React.Fragment>
          ))}
        </div>
      </div>

      <div className="flex h-[26px] items-stretch" role="toolbar" aria-label="画线">
        {drawTools.map((group, index) => (
          <div
            key={index}
            className={`${rowClass} gap-px pl-[3px] ${
              index < drawTools.length - 1 ? "border-r border-r-[#808080] pr-0.5" : "flex-1"
            }`}
          >
            <Gripper />
            <div className="flex items-center">
              {group.map((tool) => (
                <ToolButton key={tool.label} tool={tool} />
              ))}
            </div>
          </div>
        ))}
      </div>
    </div>

    <main className="flex h-[400px] shrink-0">
      <div className="flex w-[70px] shrink-0 flex-col justify-between">
        <h2 className="pt-1 pl-0.5 text-[#0000c0]">
          <MixedText text="日K线" latin="font-['Liberation_Serif'] text-xs" />
        </h2>
        <div className="h-[13px] border-t border-r border-black bg-[#ff0000] pl-px font-['Liberation_Sans'] text-[11px] leading-3 text-white">
          1870.5573
        </div>
      </div>
      <Chart />
    </main>
  </div>
);

export default App;
